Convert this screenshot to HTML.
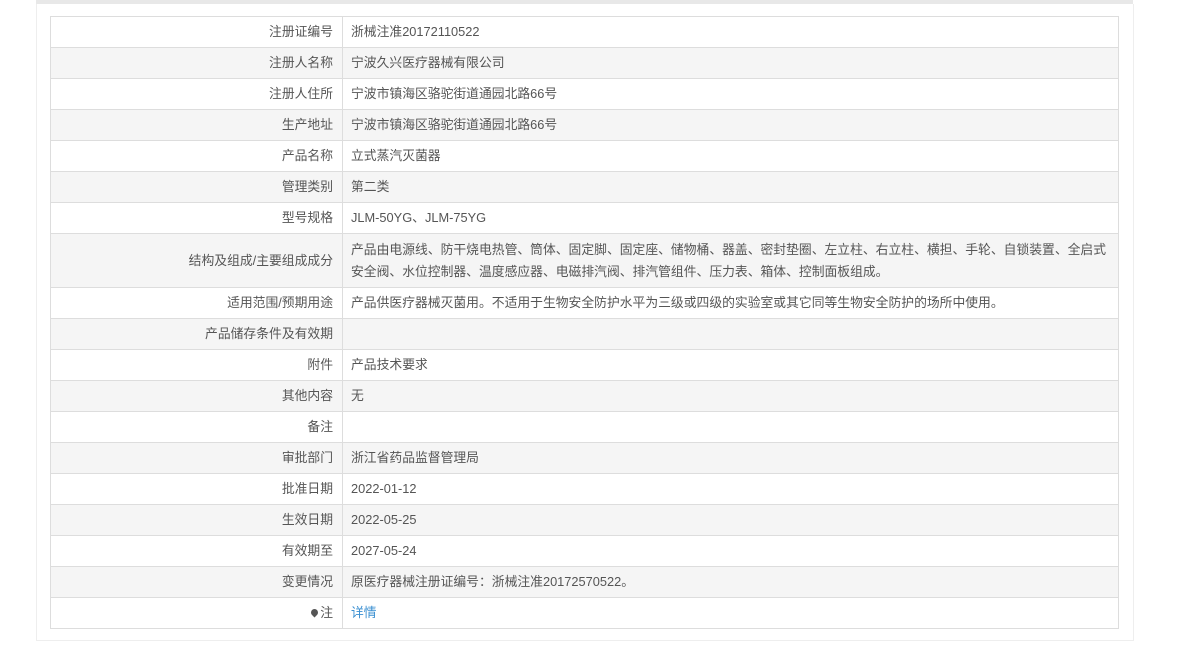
<!DOCTYPE html>
<html><head><meta charset="utf-8"><style>
html,body{margin:0;padding:0;background:#fff;width:1200px;height:668px;overflow:hidden}
body{font-family:"Liberation Sans","Noto Sans CJK SC",sans-serif;font-size:12.8px;color:#555}
.top{position:absolute;left:36px;top:0;width:1097px;height:4px;background:#e8e8e8}
.box{position:absolute;left:36px;top:4px;width:1096px;height:636px;border:1px solid #eee;border-top:none;background:#fff}
table{position:absolute;left:50px;top:16px;width:1069px;border-collapse:collapse;border:1px solid #ddd}
td{border:1px solid #ddd;height:30px;padding:0 8px;line-height:22px;vertical-align:middle}
td.l{width:274px;text-align:right;padding-right:9px}
tr:nth-child(even) td{background:#f5f5f5}
tr.tall td{height:53px}
a{color:#3a8fd1;text-decoration:none}
.pin{display:inline-block;width:7px;height:7px;background:#555;border-radius:50% 50% 50% 0;transform:rotate(-45deg);margin-right:2px;vertical-align:1px}
</style></head><body>
<div class="top"></div><div class="box"></div>
<table>
<tr><td class="l">注册证编号</td><td>浙械注准20172110522</td></tr>
<tr><td class="l">注册人名称</td><td>宁波久兴医疗器械有限公司</td></tr>
<tr><td class="l">注册人住所</td><td>宁波市镇海区骆驼街道通园北路66号</td></tr>
<tr><td class="l">生产地址</td><td>宁波市镇海区骆驼街道通园北路66号</td></tr>
<tr><td class="l">产品名称</td><td>立式蒸汽灭菌器</td></tr>
<tr><td class="l">管理类别</td><td>第二类</td></tr>
<tr><td class="l">型号规格</td><td>JLM-50YG、JLM-75YG</td></tr>
<tr class="tall"><td class="l">结构及组成/主要组成成分</td><td>产品由电源线、防干烧电热管、筒体、固定脚、固定座、储物桶、器盖、密封垫圈、左立柱、右立柱、横担、手轮、自锁装置、全启式<br>安全阀、水位控制器、温度感应器、电磁排汽阀、排汽管组件、压力表、箱体、控制面板组成。</td></tr>
<tr><td class="l">适用范围/预期用途</td><td>产品供医疗器械灭菌用。不适用于生物安全防护水平为三级或四级的实验室或其它同等生物安全防护的场所中使用。</td></tr>
<tr><td class="l">产品储存条件及有效期</td><td></td></tr>
<tr><td class="l">附件</td><td>产品技术要求</td></tr>
<tr><td class="l">其他内容</td><td>无</td></tr>
<tr><td class="l">备注</td><td></td></tr>
<tr><td class="l">审批部门</td><td>浙江省药品监督管理局</td></tr>
<tr><td class="l">批准日期</td><td>2022-01-12</td></tr>
<tr><td class="l">生效日期</td><td>2022-05-25</td></tr>
<tr><td class="l">有效期至</td><td>2027-05-24</td></tr>
<tr><td class="l">变更情况</td><td>原医疗器械注册证编号：浙械注准20172570522。</td></tr>
<tr><td class="l"><span class="pin"></span>注</td><td><a>详情</a></td></tr>
</table>
</body></html>
